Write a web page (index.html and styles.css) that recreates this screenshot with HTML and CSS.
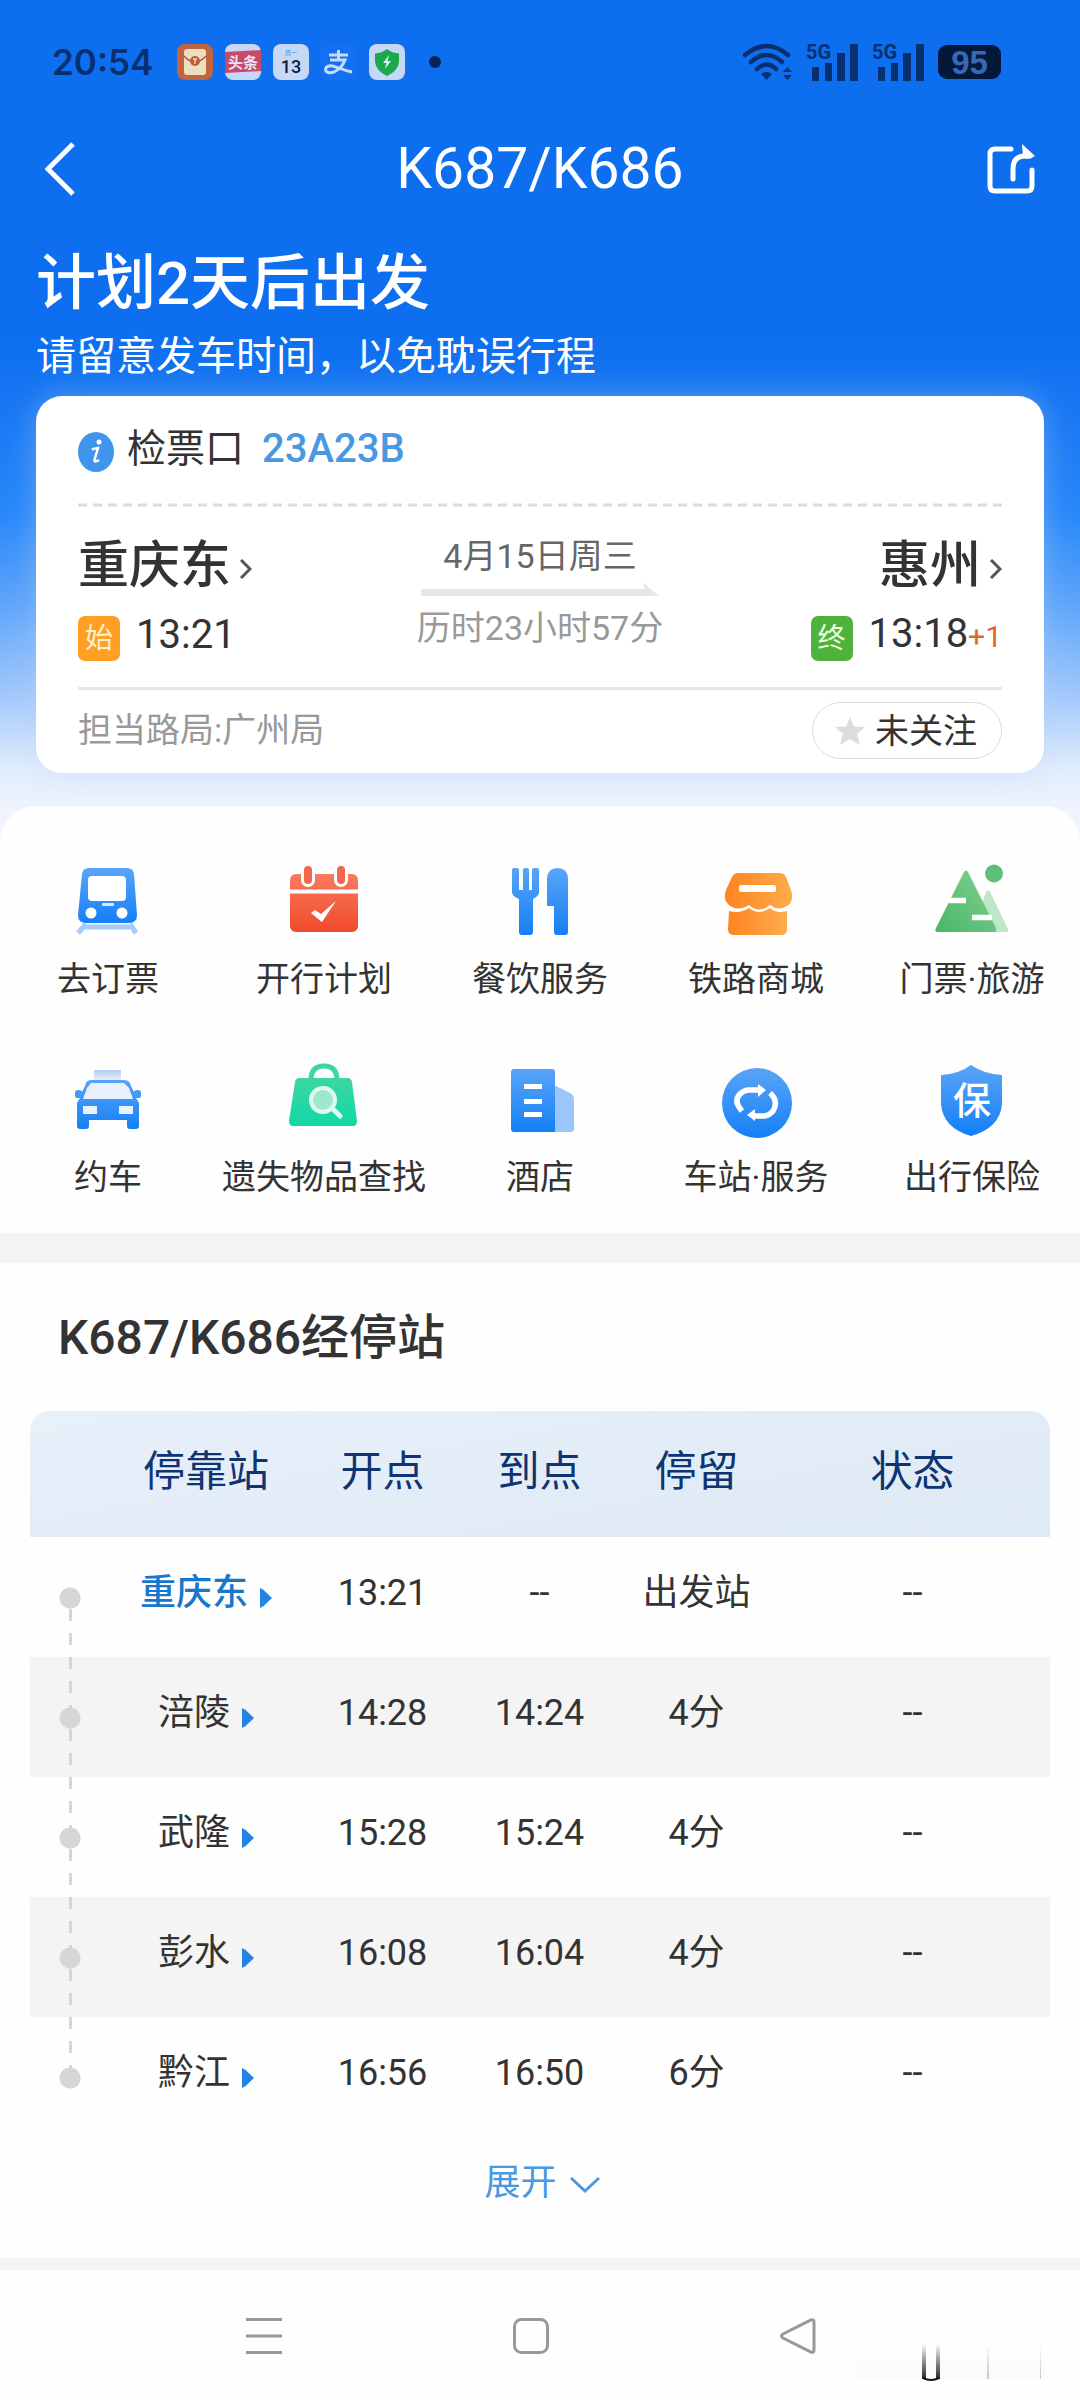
FILE: index.html
```html
<!DOCTYPE html>
<html lang="zh-CN">
<head>
<meta charset="utf-8">
<meta name="viewport" content="width=device-width, initial-scale=1">
<title>K687/K686</title>
<link rel="stylesheet" href="styles.css">
</head>
<body>
<svg class="defs" width="0" height="0" aria-hidden="true">
  <defs>
    <linearGradient id="blue" x1="0" y1="0" x2="0" y2="1"><stop offset="0" stop-color="#5aa4f8"/><stop offset="1" stop-color="#1480f6"/></linearGradient>
    <linearGradient id="red" x1="0" y1="0" x2="0" y2="1"><stop offset="0" stop-color="#fb7a5e"/><stop offset="1" stop-color="#ef4a2a"/></linearGradient>
    <linearGradient id="orange" x1="0" y1="0" x2="1" y2="0"><stop offset="0" stop-color="#ff8420"/><stop offset="1" stop-color="#fdac4c"/></linearGradient>
    <linearGradient id="green" x1="1" y1="0" x2="0" y2="1"><stop offset="0" stop-color="#86d092"/><stop offset="1" stop-color="#46b766"/></linearGradient>
    <linearGradient id="mint" x1="0" y1="0" x2="0" y2="1"><stop offset="0" stop-color="#3fd6a2"/><stop offset="1" stop-color="#10d8a6"/></linearGradient>
    <linearGradient id="sign" x1="0" y1="0" x2="0" y2="1"><stop offset="0" stop-color="#b4cdf6"/><stop offset="1" stop-color="#e6effc"/></linearGradient>
    <linearGradient id="fade" x1="0" y1="0" x2="0" y2="1"><stop offset="0" stop-color="#000" stop-opacity="0"/><stop offset="1" stop-color="#000" stop-opacity=".85"/></linearGradient>
  </defs>
</svg>

<header class="hero">
  <div class="status">
    <span class="clock">20:54</span>
    <div class="apps">
      <svg viewBox="0 0 36 36"><rect width="36" height="36" rx="8" fill="#c4633f"/><rect x="7" y="5" width="22" height="26" rx="3" fill="#eadfc0"/><path d="M7 12q11 12 22 0" fill="none" stroke="#b5573a" stroke-width="1.5"/><circle cx="18" cy="17" r="5" fill="#c05a3a"/><path d="M16 15h4M18 15v5" stroke="#eadfc0" stroke-width="1.3"/></svg>
      <svg viewBox="0 0 36 36"><rect width="36" height="36" rx="8" fill="#c6d8f5"/><path d="M0 8L36 6V27L0 29Z" fill="#c94a68"/><text x="18" y="24" class="glyph" font-size="15" font-weight="700" fill="#e6e6f5">头条</text></svg>
      <svg viewBox="0 0 36 36"><rect width="36" height="36" rx="8" fill="#c6d8f5"/><text x="18" y="11" class="glyph" font-size="6" fill="#3b86d8">周一</text><text x="18" y="29" class="glyph" font-size="18" font-weight="500" fill="#0b1c3c">13</text></svg>
      <svg viewBox="0 0 36 36"><rect width="36" height="36" rx="8" fill="#1370f3"/><path d="M8 11H27M17.500 6V16M9 16H24Q21 24 13 28C7 30 3 27 5 24C9 18 20 26 31 28" fill="none" stroke="#c8dcf8" stroke-width="3"/></svg>
      <svg viewBox="0 0 36 36"><rect width="36" height="36" rx="8" fill="#c6d8f5"/><path d="M18 5Q23 9 30 9.500V18Q29 27 18 32Q7 27 6 18V9.500Q13 9 18 5Z" fill="#1ea84e"/><path d="M20 11L14 19H17.500L16 25L22 17H18.500Z" fill="#d8eef5"/></svg>
    </div>
    <span class="dot"></span>
    <div class="signals">
      <svg class="wifi" viewBox="0 0 50 38"><g fill="none" stroke="#06306f" stroke-width="4.500" stroke-linecap="round"><path d="M3 12Q25 -6 46 12"/><path d="M9 19Q25 5 40 19"/><path d="M15 26Q25 17 34 26"/></g><path d="M19 31Q25 27 30 31L24.500 37Z M41 29L45.500 24L50 29Z M41 32L45.500 37L50 32Z" fill="#06306f"/></svg>
      <svg class="cell" viewBox="0 0 52 50"><text x="0" y="22" class="gen" fill="#06306f">5G</text><path d="M6 30h7v14h-7zM19 26h7v18h-7zM31 16h8v28h-8zM44 7h8v37h-8z" fill="#06306f"/></svg>
      <svg class="cell" viewBox="0 0 52 50"><text x="0" y="22" class="gen" fill="#06306f">5G</text><path d="M6 30h7v14h-7zM19 26h7v18h-7zM31 16h8v28h-8zM44 7h8v37h-8z" fill="#06306f"/></svg>
      <span class="battery">95</span>
    </div>
  </div>

  <nav class="topbar">
    <button class="icon-btn" aria-label="返回"><svg viewBox="0 0 30 54" width="30" height="54"><path d="M28 2L3 27L28 52" fill="none" stroke="#fff" stroke-width="5"/></svg></button>
    <h1>K687/K686</h1>
    <button class="icon-btn" aria-label="分享"><svg viewBox="0 0 48 52" width="48" height="52"><g fill="none" stroke="#fff" stroke-width="5" stroke-linecap="round" stroke-linejoin="round"><path d="M24 6H8Q3 6 3 11V43Q3 48 8 48H40Q45 48 45 43V27"/><path d="M26 36V26Q26 13 38 13H43"/></g><path d="M35 1L48 13Q42 17 36 15Z" fill="#fff"/></svg></button>
  </nav>

  <h2 class="plan">计划2天后出发</h2>
  <p class="hint">请留意发车时间，以免耽误行程</p>

  <section class="card">
    <div class="gate">
      <svg viewBox="0 0 36 40" width="36" height="40"><ellipse cx="18" cy="20" rx="18" ry="20" fill="#3f95ec"/><circle cx="21" cy="10" r="2.500" fill="#fff"/><path d="M14 17.500Q18 16 20 16L16.500 28Q16 31 21 28" fill="none" stroke="#fff" stroke-width="2.500"/></svg>
      <span>检票口</span>
      <strong>23A23B</strong>
    </div>
    <svg class="dashes" aria-hidden="true"><line x1="0" y1="2" x2="100%" y2="2"/></svg>
    <div class="route">
      <div class="end">
        <a class="city" href="#from">重庆东<svg viewBox="0 0 12 20" width="12" height="20"><path d="M1 1L10 10L1 19" fill="none" stroke="#555" stroke-width="3"/></svg></a>
        <div class="time"><span class="badge start">始</span><span>13:21</span></div>
      </div>
      <div class="middle">
        <span class="date">4月15日周三</span>
        <svg class="arrow" viewBox="0 0 238 14" width="238" height="14"><path d="M0 7H224L221 0L238 14H0Z" fill="#e6e6e6"/></svg>
        <span class="duration">历时23小时57分</span>
      </div>
      <div class="end right">
        <a class="city" href="#to">惠州<svg viewBox="0 0 12 20" width="12" height="20"><path d="M1 1L10 10L1 19" fill="none" stroke="#555" stroke-width="3"/></svg></a>
        <div class="time"><span class="badge finish">终</span><span>13:18<small>+1</small></span></div>
      </div>
    </div>
    <div class="bureau">
      <span>担当路局:广州局</span>
      <button class="follow"><svg viewBox="0 0 30 30" width="30" height="30"><path d="M15 1L19 10.500L30 11L22 18L25 29L15 23L5 29L8 18L0 11L11 10.500Z" fill="#dcdcdc"/></svg>未关注</button>
    </div>
  </section>
</header>

<main class="sheet">
  <nav class="services">
    <a href="#ticket"><svg viewBox="0 0 80 80"><path d="M18 63L10 72M62 63L68 72" stroke="#a5cbfa" stroke-width="5"/><path d="M16 66H62" stroke="#a5cbfa" stroke-width="5"/><path d="M21 7H59Q65 7 66 13L69 54Q69 62 61 62H18Q10 62 10 54L14 13Q15 7 21 7Z" fill="url(#blue)"/><rect x="20" y="15" width="38" height="25" rx="4" fill="#fff"/><rect x="34" y="42" width="12" height="3" rx="1" fill="#d8e8fd"/><circle cx="23" cy="52" r="5.500" fill="#fff"/><circle cx="54" cy="52" r="5.500" fill="#fff"/></svg><span>去订票</span></a>
    <a href="#schedule"><svg viewBox="0 0 80 80"><rect x="6" y="13" width="68" height="58" rx="6" fill="url(#red)"/><path d="M6 30.500H74" stroke="#fff" stroke-width="4"/><path d="M24 8V19M57 8V19" stroke="#fff" stroke-width="14" stroke-linecap="round"/><path d="M24 9V19M57 9V19" stroke="#f2694c" stroke-width="8" stroke-linecap="round"/><path d="M27 52L31 49L37 53L52 40L38 61Z" fill="#fff"/></svg><span>开行计划</span></a>
    <a href="#dining"><svg viewBox="0 0 80 80"><path d="M12 9Q12 7 14 7H17Q19 7 19 9V29H23V9Q23 7 25 7H27Q29 7 29 9V29H32V9Q32 7 34 7H37Q39 7 39 9V31Q39 35 33 38V71Q33 74 30 74H22Q19 74 19 71V38Q12 35 12 31Z M47 45V17Q48 7 57.500 7Q67 7 68 17V71Q68 74 65 74H57Q54 74 54 71V45Z" fill="url(#blue)"/></svg><span>餐饮服务</span></a>
    <a href="#mall"><svg viewBox="0 0 80 80"><path d="M22 12H64Q68 12 70 16L75 29Q79 42 69 46Q62 50 54 44Q43 53 33 44Q24 50 16 46Q6 41 10 29L16 16Q18 12 22 12Z" fill="url(#orange)"/><path d="M13 50Q24 53 33 47Q43 55 54 47Q60 53 71 50V68Q71 74 65 74H18Q12 74 12 68Z" fill="url(#orange)"/><rect x="23" y="24" width="37" height="7" rx="2" fill="#fff"/></svg><span>铁路商城</span></a>
    <a href="#travel"><svg viewBox="0 0 80 80"><path d="M54 31Q56 28 58 31L76 68Q77 71 74 71H40Z" fill="#bfe6c6"/><path d="M32 11Q34 8 36 11L64 67Q65 71 62 71H6Q2 71 4 67Z" fill="url(#green)"/><path d="M17 39.500H34M40 56.500H60" stroke="#fff" stroke-width="5.500"/><circle cx="62" cy="12.500" r="9" fill="#5dc078"/></svg><span>门票·旅游</span></a>
    <a href="#car"><svg viewBox="0 0 80 80"><rect x="26" y="11" width="27" height="10" fill="url(#sign)"/><path d="M23 21H56Q62 21 63 27L66 33Q66 31 69 31H70Q73 31 73 34V37Q73 39 70 39H68L71 44V67Q71 70 68 70H62Q59 70 59 67V61H21V67Q21 70 18 70H12Q9 70 9 67V44L12 39H10Q7 39 7 37V34Q7 31 10 31H11Q14 31 14 33L17 27Q18 21 23 21Z" fill="url(#blue)"/><path d="M23 24H56L61 29L65 40H15L19 29Z" fill="#e8f1fc"/><path d="M15 47H29V55H15zM51 47H65V55H51z" fill="#e8f1fc"/></svg><span>约车</span></a>
    <a href="#lost"><svg viewBox="0 0 80 80"><path d="M27 22V19Q28 7 40 7Q52 7 53 19V22" fill="none" stroke="#3fd6a2" stroke-width="5"/><path d="M15 19H64Q67 19 68 23L73 62Q73 67 69 67H9Q5 67 5 62L11 23Q12 19 15 19Z" fill="url(#mint)"/><path d="M48 49L56 57" stroke="#dffaf0" stroke-width="5" stroke-linecap="round"/><circle cx="39" cy="41" r="12" fill="#9de8cd" stroke="#dffaf0" stroke-width="4"/></svg><span>遗失物品查找</span></a>
    <a href="#hotel"><svg viewBox="0 0 80 80"><path d="M54 26L70 34Q74 36 74 40V70Q74 73 71 73H54Z" fill="#9ac6fb"/><path d="M14 10H52Q55 10 55 13V73H14Q11 73 11 70V13Q11 10 14 10Z" fill="url(#blue)"/><path d="M24 27.500H42M24 42.500H42M24 55.500H42" stroke="#fff" stroke-width="5"/></svg><span>酒店</span></a>
    <a href="#station"><svg viewBox="0 0 80 80"><circle cx="41" cy="44" r="35" fill="url(#blue)"/><g fill="none" stroke="#fff" stroke-width="5.500"><path d="M26 52Q17 42 24 35Q28 31 33 31H44"/><path d="M54 34Q63 42 57 52Q53 57 47 57H37"/></g><path d="M42 25L50 31L42 38ZM39 50L31 56L39 62Z" fill="#fff"/></svg><span>车站·服务</span></a>
    <a href="#insurance"><svg viewBox="0 0 80 80"><path d="M39 6Q52 15 70 16V45Q68 69 39 77Q11 69 9 45V16Q27 15 39 6Z" fill="url(#blue)"/><text x="40" y="55" class="glyph" font-size="38" font-weight="500" fill="#fff">保</text></svg><span>出行保险</span></a>
  </nav>

  <section class="stops">
    <h2>K687/K686经停站</h2>
    <table>
      <colgroup><col class="c-line"><col class="c-station"><col class="c-time"><col class="c-time"><col class="c-time"><col></colgroup>
      <thead><tr><th></th><th>停靠站</th><th>开点</th><th>到点</th><th>停留</th><th>状态</th></tr></thead>
      <tbody>
        <tr><td class="line"></td><td><a class="origin" href="#s1">重庆东</a></td><td>13:21</td><td>--</td><td>出发站</td><td>--</td></tr>
        <tr><td class="line"></td><td><a href="#s2">涪陵</a></td><td>14:28</td><td>14:24</td><td>4分</td><td>--</td></tr>
        <tr><td class="line"></td><td><a href="#s3">武隆</a></td><td>15:28</td><td>15:24</td><td>4分</td><td>--</td></tr>
        <tr><td class="line"></td><td><a href="#s4">彭水</a></td><td>16:08</td><td>16:04</td><td>4分</td><td>--</td></tr>
        <tr><td class="line"></td><td><a href="#s5">黔江</a></td><td>16:56</td><td>16:50</td><td>6分</td><td>--</td></tr>
      </tbody>
    </table>
    <button class="expand">展开<svg viewBox="0 0 30 18" width="30" height="18"><path d="M1 2L15 15L29 2" fill="none" stroke="#4a98e0" stroke-width="3"/></svg></button>
  </section>
</main>

<footer class="sysnav">
  <button aria-label="最近任务"><svg viewBox="0 0 36 36"><path d="M0 1.500H36M0 18H36M0 34.500H36" stroke="#999" stroke-width="3"/></svg></button>
  <button aria-label="主屏幕"><svg viewBox="0 0 36 36"><rect x="1.500" y="1.500" width="33" height="33" rx="7" fill="none" stroke="#999" stroke-width="3"/></svg></button>
  <button aria-label="返回上一级"><svg viewBox="0 0 36 36"><path d="M31 2Q34 1 34 4V32Q34 35 31 34L3 20Q0 18 3 16Z" fill="none" stroke="#999" stroke-width="3"/></svg></button>
  <svg class="mark" viewBox="0 0 190 38" aria-hidden="true"><path d="M0 0H190V35H0Z" fill="url(#fade)" opacity=".02"/><path d="M67 0H71V35H67zM81 0H85V35H81z" fill="url(#fade)"/><path d="M68 34Q76 38 84 34" fill="none" stroke="#111" stroke-width="2"/><path d="M132 0H134V35H132zM185 0H186V35H185z" fill="url(#fade)" opacity=".25"/></svg>
</footer>
</body>
</html>
```

FILE: styles.css
```css
* { box-sizing: border-box; }

body {
  margin: 0;
  background: #fefefe;
  color: #333;
  font-family: Roboto, "Noto Sans CJK SC", sans-serif;
  font-size: 36px;
}

h1, h2, p { margin: 0; font-weight: 400; }
a { color: inherit; text-decoration: none; }
button { margin: 0; padding: 0; border: 0; background: none; color: inherit; font: inherit; }
svg { display: block; flex: none; }
.defs { position: absolute; }
.glyph { text-anchor: middle; font-family: Roboto, "Noto Sans CJK SC", sans-serif; }
.gen { font-family: Roboto, sans-serif; font-weight: 700; font-size: 20px; }

/* Hero */
.hero {
  padding: 0 36px 69px;
  color: #fff;
  background: linear-gradient(#0d6fef 0, #0d6fef 40%, #1a79f4 50%, #2888f9 61%, #5fa6fa 72%, #a4cafb 83%, #dfebfd 91%, #eff4fe 96%);
}

.status { display: flex; align-items: center; height: 124px; padding: 0 43px 0 16px; }
.clock { width: 125px; color: #06306f; font: 600 35px/44px Inter, sans-serif; }
.apps { display: flex; gap: 12px; }
.apps svg { width: 36px; height: 36px; }
.dot { width: 12px; height: 12px; margin-left: 24px; border-radius: 50%; background: #062456; }
.signals { display: flex; align-items: center; gap: 14px; margin-left: auto; }
.wifi { width: 50px; height: 38px; }
.cell { width: 52px; height: 50px; }
.battery {
  width: 63px;
  height: 34px;
  border-radius: 9px;
  background: #04183a;
  color: #3668b8;
  font: 700 33px/35px "Liberation Sans", sans-serif;
  text-align: center;
}

.topbar { display: flex; align-items: center; justify-content: space-between; height: 90px; padding: 0 9px; }
.topbar h1 { padding-left: 18px; font-size: 57px; line-height: 64px; }
.plan { margin-top: 34px; font-size: 60px; font-weight: 500; line-height: 72px; }
.hint { padding: 11px 0 14px; font-size: 40px; line-height: 51px; }

/* Trip card */
.card {
  padding: 23px 42px 13px;
  border-radius: 26px;
  background: #fff;
  color: #333;
  box-shadow: 0 0 30px rgba(196, 216, 244, .4);
}

.gate { display: flex; align-items: center; height: 60px; font-size: 39px; line-height: 60px; }
.gate span { margin-left: 13px; }
.gate strong { margin-left: 18px; color: #4a97e2; font-size: 40px; font-weight: 500; }
.gate svg { margin-top: 6px; }
.dashes { width: 100%; height: 4px; margin-top: 24px; }
.dashes line { stroke: #dcdcdc; stroke-width: 3; stroke-dasharray: 9 6; }

.route { display: flex; justify-content: space-between; height: 183px; padding-top: 23px; border-bottom: 3px solid #e6e6e6; }
.end { display: flex; flex: 1; flex-direction: column; gap: 3px; }
.right { align-items: flex-end; }
.city { display: flex; align-items: center; gap: 9px; font-size: 51px; font-weight: 500; line-height: 72px; }
.city svg { margin-top: 6px; }
.time { display: flex; align-items: center; gap: 16px; height: 60px; font-size: 40px; line-height: 52px; }
.time small { color: #e0692a; font-size: 30px; }
.badge {
  width: 42px;
  height: 45px;
  margin-top: 6px;
  border-radius: 7px;
  color: #fff3cf;
  font-size: 28px;
  line-height: 45px;
  text-align: center;
}
.start { background: #ffa024; }
.finish { background: #50b23a; color: #e8ffe0; }
.middle { display: flex; flex-direction: column; align-items: center; padding-top: 2px; color: #666; font-size: 34px; line-height: 48px; }
.arrow { margin: 2px 0 8px; }
.duration { color: #999; }

.bureau { display: flex; justify-content: space-between; padding-top: 12px; color: #999; font-size: 34px; line-height: 56px; }
.follow {
  display: flex;
  align-items: center;
  gap: 10px;
  height: 57px;
  margin-bottom: 1px;
  padding: 0 24px 0 22px;
  border: 1px solid #dcdcdc;
  border-radius: 29px;
  color: #333;
}

/* Service grid */
.sheet { margin-top: -36px; border-radius: 36px 36px 0 0; background: #fefefe; }
.services { display: grid; grid-template-columns: repeat(5, 1fr); row-gap: 50px; padding: 55px 0 26px; }
.services a { display: flex; flex-direction: column; align-items: center; gap: 8px; font-size: 34px; line-height: 60px; white-space: nowrap; }
.services svg { width: 80px; height: 80px; }

/* Stop table */
.stops { padding: 0 30px 37px; border-top: 30px solid #f4f4f4; border-bottom: 12px solid #f4f4f4; }
.stops h2 { padding: 39px 28px 37px; font-size: 48px; font-weight: 500; line-height: 72px; }
table { width: 100%; border-spacing: 0; table-layout: fixed; text-align: center; }
.c-line { width: 78px; }
.c-station { width: 196px; }
.c-time { width: 157px; }
thead tr { background: linear-gradient(170deg, #e8f0fa, #dde9f4); }
th { height: 126px; padding: 0 0 4px; color: #0e3472; font-size: 42px; font-weight: 400; line-height: 56px; }
th:first-child { border-top-left-radius: 20px; }
th:last-child { border-top-right-radius: 20px; }
td { height: 120px; padding: 0 0 8px; font-size: 36px; line-height: 48px; }
tbody tr:nth-child(even) { background: #f4f4f4; }
td a { display: inline-flex; align-items: center; gap: 12px; }
td a::after {
  content: "";
  width: 12px;
  height: 20px;
  margin-top: 10px;
  background: #2482e4;
  clip-path: polygon(0 0, 30% 10%, 100% 50%, 30% 90%, 0 100%);
}
.origin { color: #1478cc; font-weight: 500; }

.line {
  background:
    radial-gradient(circle at 40px 61px, #d6d6d6 10px, transparent 11px),
    repeating-linear-gradient(#d6d6d6 0 12px, transparent 12px 24px) 39px 0 / 3px 100% no-repeat;
}
tr:first-child .line {
  background:
    radial-gradient(circle at 40px 61px, #d6d6d6 10px, transparent 11px),
    linear-gradient(#fefefe, #fefefe) 39px 0 / 3px 60px no-repeat,
    repeating-linear-gradient(#d6d6d6 0 12px, transparent 12px 24px) 39px 0 / 3px 100% no-repeat;
}
tr:last-child .line {
  background:
    radial-gradient(circle at 40px 61px, #d6d6d6 10px, transparent 11px),
    repeating-linear-gradient(#d6d6d6 0 12px, transparent 12px 24px) 39px 0 / 3px 60px no-repeat;
}

.expand { display: flex; align-items: center; gap: 13px; height: 84px; margin: 0 auto; padding-left: 4px; color: #4a98e0; font-size: 36px; }
.expand svg { margin-top: 12px; }

/* System navigation */
.sysnav { position: relative; display: flex; padding: 48px 149px 48px 130px; }
.sysnav button { flex: 1; display: flex; justify-content: center; }
.sysnav button svg { width: 36px; height: 36px; }
.mark { position: absolute; right: 35px; bottom: 20px; width: 190px; height: 38px; }
```
